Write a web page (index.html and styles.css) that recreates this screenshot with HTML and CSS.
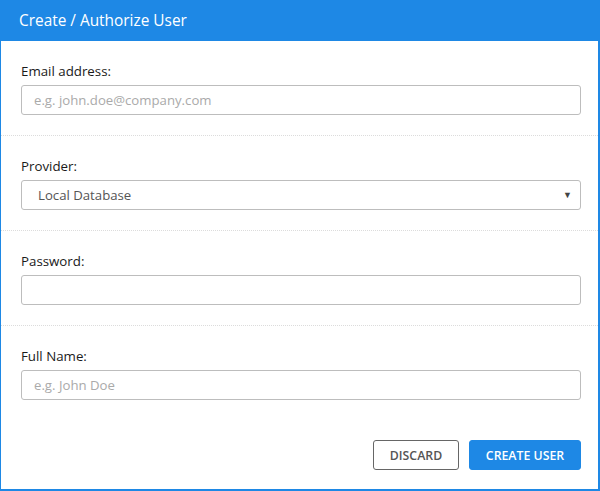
FILE: index.html
```html
<!DOCTYPE html>
<html>
<head>
<meta charset="utf-8">
<link rel="stylesheet" href="styles.css">
</head>
<body>
<div class="dialog">
  <div class="header">Create / Authorize User</div>
  <div class="section">
    <label class="label">Email address:</label>
    <div class="input placeholder">e.g. john.doe@company.com</div>
  </div>
  <div class="section">
    <label class="label">Provider:</label>
    <div class="input select"><span>Local Database</span><span class="caret">▼</span></div>
  </div>
  <div class="section">
    <label class="label">Password:</label>
    <div class="input"></div>
  </div>
  <div class="section last">
    <label class="label">Full Name:</label>
    <div class="input placeholder">e.g. John Doe</div>
  </div>
  <div class="actions">
    <button class="btn btn-outline">DISCARD</button>
    <button class="btn btn-primary">CREATE USER</button>
  </div>
</div>
</body>
</html>
```
FILE: styles.css
```css
* { box-sizing: border-box; }
html, body { margin: 0; padding: 0; background: #fff; }
body { font-family: "Open Sans", "Noto Sans", sans-serif; }
.dialog {
  width: 600px;
  height: 491px;
  border: 1px solid #1E88E5;
  border-width: 0 2px 2px 1px;
  display: flex;
  flex-direction: column;
}
.header {
  height: 41px;
  background: #1E88E5;
  color: #fff;
  font-size: 15.4px;
  line-height: 41px;
  padding-left: 19px;
  margin: 0 -2px 0 -1px;
}
.section {
  padding: 20px 17px 20px 20px;
  border-bottom: 1px dotted #dcdcdc;
  display: flex;
  flex-direction: column;
}
.section.last { border-bottom: none; }
.label {
  font-size: 13.3px;
  color: #1a1a1a;
  line-height: 20px;
  margin-bottom: 4px;
}
.input {
  height: 30px;
  border: 1px solid #bdbdbd;
  border-radius: 3px;
  font-size: 13.2px;
  line-height: 28px;
  padding: 0 12px;
  color: #555;
}
.placeholder { color: #aaa; }
.select {
  display: flex;
  justify-content: space-between;
  padding: 0 8px 0 16px;
  color: #555;
}
.caret { font-size: 9px; color: #444; }
.actions {
  display: flex;
  justify-content: flex-end;
  gap: 10px;
  padding: 20px 17px 0 20px;
  margin-top: auto;
  margin-bottom: 19px;
}
.btn {
  height: 30px;
  border-radius: 3px;
  font-family: "Open Sans", "Noto Sans", sans-serif;
  font-size: 12.3px;
  font-weight: 600;
  padding: 0 10px;
  cursor: pointer;
}
.btn-outline {
  width: 86px;
  background: #fff;
  border: 1px solid #666;
  color: #555;
}
.btn-primary {
  width: 112px;
  background: #1E88E5;
  border: 1px solid #1E88E5;
  color: #fff;
}
```
